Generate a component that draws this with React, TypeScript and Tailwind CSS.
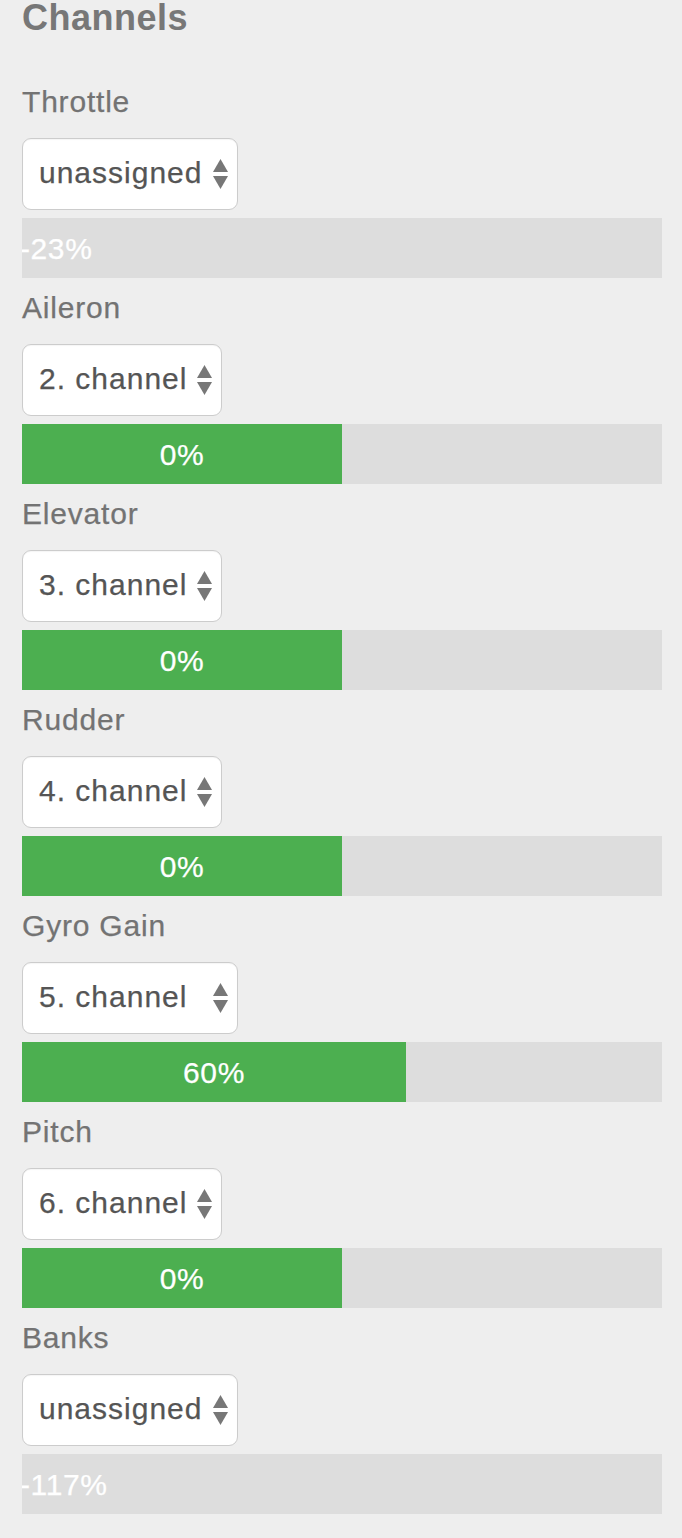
import React from "react";

type Ch = { label: string; sel: string; w: string; value: number; fill: number; assigned: boolean };

const channels: Ch[] = [
  { label: "Throttle", sel: "unassigned", w: "w-[216px]", value: -23, fill: 0, assigned: false },
  { label: "Aileron", sel: "2. channel", w: "w-[200px]", value: 0, fill: 50, assigned: true },
  { label: "Elevator", sel: "3. channel", w: "w-[200px]", value: 0, fill: 50, assigned: true },
  { label: "Rudder", sel: "4. channel", w: "w-[200px]", value: 0, fill: 50, assigned: true },
  { label: "Gyro Gain", sel: "5. channel", w: "w-[216px]", value: 60, fill: 60, assigned: true },
  { label: "Pitch", sel: "6. channel", w: "w-[200px]", value: 0, fill: 50, assigned: true },
  { label: "Banks", sel: "unassigned", w: "w-[216px]", value: -117, fill: 0, assigned: false },
];

function Arrows() {
  return (
    <svg width="15" height="30" viewBox="0 0 15 30" className="shrink-0">
      <polygon points="7.5,0 15,13 0,13" fill="#777" />
      <polygon points="0,17 15,17 7.5,30" fill="#777" />
    </svg>
  );
}

export default function App() {
  return (
    <div
      className="min-h-screen bg-[#eeeeee] pl-[22px] pr-[20px] pb-[24px]"
      style={{ fontFamily: '"Liberation Sans", Arial, sans-serif' }}
    >
      <div className="h-[72px] text-[36px] leading-[36px] font-bold text-[#777] tracking-[0.5px]">
        Channels
      </div>
      {channels.map((c) => (
        <div key={c.label} className="mt-[10px]">
          <div className="h-[40px] text-[30px] leading-[40px] text-[#737373] tracking-[0.8px] [-webkit-text-stroke:0.25px_#737373]">
            {c.label}
          </div>
          <div
            className={`mt-[16px] h-[72px] ${c.w} flex items-center justify-between rounded-[9px] border-[1.5px] border-[#cccccc] bg-white pl-[16px] pr-[9px] shadow-[inset_0_1px_1px_rgba(0,0,0,0.04)]`}
          >
            <span className="text-[30px] text-[#555] tracking-[1px] leading-none -mt-[2px] [-webkit-text-stroke:0.25px_#555]">
              {c.sel}
            </span>
            <Arrows />
          </div>
          <div className="mt-[8px] h-[60px] bg-[#dddddd] flex overflow-hidden">
            {c.assigned ? (
              <div
                className="h-full bg-[#4caf50] flex items-center justify-center text-white text-[30px] tracking-[0.6px] [-webkit-text-stroke:0.25px_#ffffff]"
                style={{ width: `${c.fill}%` }}
              >
                {c.value}%
              </div>
            ) : (
              <div className="h-full flex items-center -ml-[2px] text-white text-[30px] tracking-[0.6px] [-webkit-text-stroke:0.25px_#ffffff]">
                {c.value}%
              </div>
            )}
          </div>
        </div>
      ))}
    </div>
  );
}
